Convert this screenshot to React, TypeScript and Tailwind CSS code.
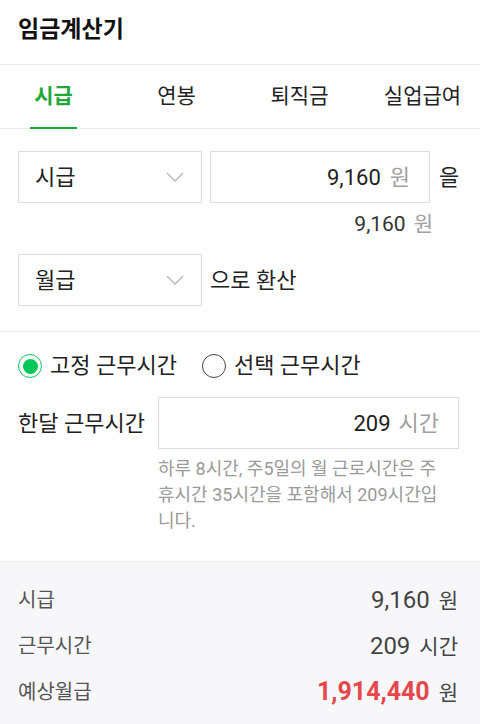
import { useState } from "react";

const font = { fontFamily: '"Roboto", "Noto Sans CJK KR", sans-serif' };

function Chevron() {
  return (
    <svg width="18" height="10" viewBox="0 0 18 10" fill="none" className="shrink-0">
      <path d="M1 1l8 8 8-8" stroke="#bdbdbd" strokeWidth="1.6" />
    </svg>
  );
}

function SelectBox({ label }: { label: string }) {
  return (
    <div className="w-[184px] h-[52px] border border-[#dcdcdc] flex items-center justify-between pl-[16px] pr-[17px] text-[22px] text-[#222]">
      <span>{label}</span>
      <Chevron />
    </div>
  );
}

function Radio({ checked, label, onClick }: { checked: boolean; label: string; onClick: () => void }) {
  return (
    <button onClick={onClick} className="flex items-center gap-[8px] text-[22px] leading-[24px] text-[#222]">
      {checked ? (
        <span className="w-[24px] h-[24px] rounded-full border-[1.5px] border-[#03c75a] flex items-center justify-center">
          <span className="w-[15px] h-[15px] rounded-full bg-[#03c75a]" />
        </span>
      ) : (
        <span className="w-[24px] h-[24px] rounded-full border-[1.5px] border-[#444]" />
      )}
      <span>{label}</span>
    </button>
  );
}

export default function App() {
  const [tab, setTab] = useState(0);
  const [fixed, setFixed] = useState(true);
  const tabs = ["시급", "연봉", "퇴직금", "실업급여"];

  return (
    <div className="w-[480px] min-h-[724px] bg-white overflow-hidden" style={font}>
      <header className="h-[65px] px-[18px] flex items-center border-b border-[#ececec]">
        <h1 className="text-[23px] font-bold text-[#111] -mt-[4px]">임금계산기</h1>
      </header>

      <nav className="h-[64px] border-b border-[#ececec]">
        <div className="w-[492px] -ml-[8px] h-full grid grid-cols-4">
          {tabs.map((t, i) => (
            <button key={t} onClick={() => setTab(i)} className="h-full flex justify-center">
              <span
                className={`relative h-full flex items-center px-[4px] text-[21px] ${
                  tab === i ? "text-[#1fa83a] font-bold" : "text-[#222]"
                }`}
              >
                {t}
                {tab === i && <span className="absolute left-0 right-0 -bottom-px h-[2px] bg-[#1fa83a]" />}
              </span>
            </button>
          ))}
        </div>
      </nav>

      <section className="px-[18px] pt-[22px] pb-[25px] border-b border-[#ececec]">
        <div className="flex items-center">
          <SelectBox label="시급" />
          <div className="ml-[8px] w-[220px] h-[52px] border border-[#dcdcdc] flex items-center justify-end pr-[19px] text-[22px]">
            <span className="text-[#222]">9,160</span>
            <span className="ml-[9px] text-[#a0a0a0]">원</span>
          </div>
          <span className="ml-[9px] text-[22px] text-[#222]">을</span>
        </div>
        <div className="mt-[7px] pr-[29px] flex justify-end leading-[28px] text-[21px]">
          <span className="text-[#333]">9,160</span>
          <span className="ml-[8px] text-[#a0a0a0]">원</span>
        </div>
        <div className="mt-[16px] flex items-center">
          <SelectBox label="월급" />
          <span className="ml-[8px] text-[22px] text-[#222]">으로 환산</span>
        </div>
      </section>

      <section className="px-[18px] pt-[22px] pb-[27px] border-b border-[#ececec]">
        <div className="flex items-center gap-[25px]">
          <Radio checked={fixed} label="고정 근무시간" onClick={() => setFixed(true)} />
          <Radio checked={!fixed} label="선택 근무시간" onClick={() => setFixed(false)} />
        </div>
        <div className="mt-[19px] flex">
          <span className="w-[140px] h-[52px] flex items-center text-[22px] text-[#222]">한달 근무시간</span>
          <div className="w-[301px]">
            <div className="h-[52px] border border-[#dcdcdc] flex items-center justify-end pr-[19px] text-[22px]">
              <span className="text-[#222]">209</span>
              <span className="ml-[8px] text-[#a0a0a0]">시간</span>
            </div>
            <p className="mt-[7px] text-[18px] leading-[26px] text-[#9a9a9a]">
              하루 8시간, 주5일의 월 근로시간은 주<br />
              휴시간 35시간을 포함해서 209시간입<br />
              니다.
            </p>
          </div>
        </div>
      </section>

      <section className="bg-[#f7f7f9] px-[22px] pt-[15px] pb-[20px] text-[20px]">
        <div className="h-[46px] flex items-center justify-between">
          <span className="text-[#555] -ml-[4px]">시급</span>
          <span className="flex items-baseline text-[#444]">
            <span className="text-[24px]">9,160</span>
            <span className="ml-[9px] text-[21px]">원</span>
          </span>
        </div>
        <div className="h-[46px] flex items-center justify-between">
          <span className="text-[#555] -ml-[4px]">근무시간</span>
          <span className="flex items-baseline text-[#444]">
            <span className="text-[24px]">209</span>
            <span className="ml-[9px] text-[21px]">시간</span>
          </span>
        </div>
        <div className="h-[46px] flex items-center justify-between">
          <span className="text-[#555] -ml-[4px]">예상월급</span>
          <span className="flex items-baseline text-[#444]">
            <span className="text-[25px] text-[#e5474c] font-bold">1,914,440</span>
            <span className="ml-[9px] text-[21px]">원</span>
          </span>
        </div>
      </section>
    </div>
  );
}
